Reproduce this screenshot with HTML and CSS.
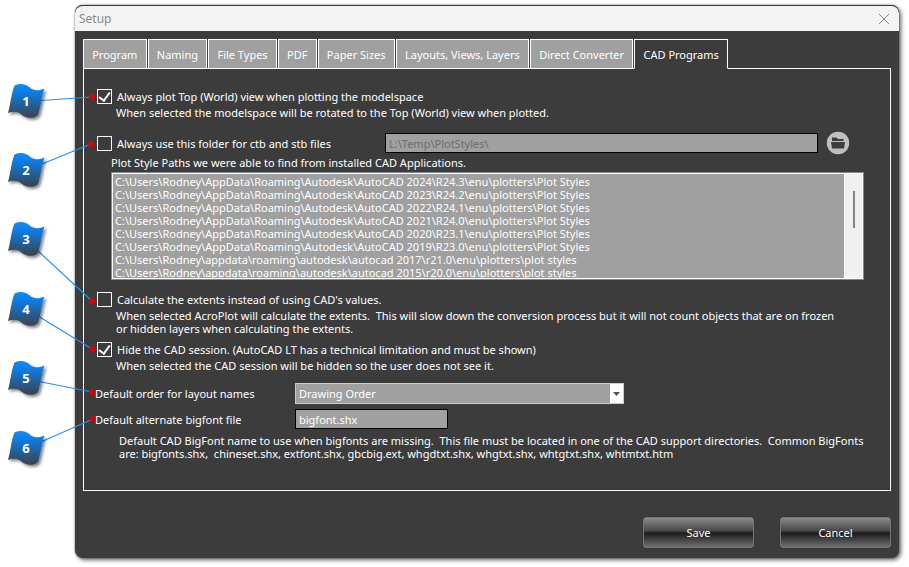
FILE: index.html
```html
<!DOCTYPE html>
<html lang="en">
<head>
  <meta charset="UTF-8" />
  <meta name="viewport" content="width=device-width, initial-scale=1.0" />
  <title>Setup</title>
  <link rel="stylesheet" href="styles.css">
</head>
<body>
  <div class="window">
    <header class="titlebar">
      <span>Setup</span>
      <button type="button" class="close" aria-label="Close">
        <svg width="12" height="12" viewBox="0 0 12 12"><path d="M1 1L11 11M11 1L1 11" stroke="#888" fill="none" /></svg>
      </button>
    </header>
    <form class="content">
      <nav class="tabs">
        <button type="button" class="tab">Program</button>
        <button type="button" class="tab">Naming</button>
        <button type="button" class="tab">File Types</button>
        <button type="button" class="tab">PDF</button>
        <button type="button" class="tab">Paper Sizes</button>
        <button type="button" class="tab">Layouts, Views, Layers</button>
        <button type="button" class="tab">Direct Converter</button>
        <button type="button" class="tab active">CAD Programs</button>
      </nav>
      <div class="panel">
        <div class="option">
          <label class="check"><input type="checkbox" checked>Always plot Top (World) view when plotting the modelspace</label>
          <p class="hint">When selected the modelspace will be rotated to the Top (World) view when plotted.</p>
        </div>

        <div class="option paths">
          <div class="folder-row">
            <label class="check"><input type="checkbox">Always use this folder for ctb and stb files</label>
            <input type="text" class="field folder" value="L:\Temp\PlotStyles\" aria-label="Plot style folder" disabled>
            <button type="button" class="browse" aria-label="Browse">
              <svg width="24" height="24" viewBox="0 0 24 24">
                <circle cx="12" cy="12" r="11.2" fill="#bfbfbf" />
                <path d="M6 10V6.500H10.500L12 8H17.500V10Z" fill="#3d3d3d" />
                <path d="M5 11H19L18 17.500H6Z" fill="#3d3d3d" />
              </svg>
            </button>
          </div>
          <label class="list-label" for="paths">Plot Style Paths we were able to find from installed CAD Applications.</label>
          <div class="listbox">
            <select id="paths" size="8">
              <option>C:\Users\Rodney\AppData\Roaming\Autodesk\AutoCAD 2024\R24.3\enu\plotters\Plot Styles</option>
              <option>C:\Users\Rodney\AppData\Roaming\Autodesk\AutoCAD 2023\R24.2\enu\plotters\Plot Styles</option>
              <option>C:\Users\Rodney\AppData\Roaming\Autodesk\AutoCAD 2022\R24.1\enu\plotters\Plot Styles</option>
              <option>C:\Users\Rodney\AppData\Roaming\Autodesk\AutoCAD 2021\R24.0\enu\plotters\Plot Styles</option>
              <option>C:\Users\Rodney\AppData\Roaming\Autodesk\AutoCAD 2020\R23.1\enu\plotters\Plot Styles</option>
              <option>C:\Users\Rodney\AppData\Roaming\Autodesk\AutoCAD 2019\R23.0\enu\plotters\Plot Styles</option>
              <option>C:\Users\Rodney\appdata\roaming\autodesk\autocad 2017\r21.0\enu\plotters\plot styles</option>
              <option>C:\Users\Rodney\appdata\roaming\autodesk\autocad 2015\r20.0\enu\plotters\plot styles</option>
            </select>
            <div class="scrollbar"><div class="thumb"></div></div>
          </div>
        </div>

        <div class="option tight">
          <label class="check"><input type="checkbox">Calculate the extents instead of using CAD's values.</label>
          <p class="hint">When selected AcroPlot will calculate the extents.&nbsp; This will slow down the conversion process but it will not count objects that are on frozen<br>or hidden layers when calculating the extents.</p>
        </div>

        <div class="option">
          <label class="check"><input type="checkbox" checked>Hide the CAD session. (AutoCAD LT has a technical limitation and must be shown)</label>
          <p class="hint">When selected the CAD session will be hidden so the user does not see it.</p>
        </div>

        <div class="defaults">
          <label for="order">Default order for layout names</label>
          <div class="dropdown">
            <select id="order">
              <option>Drawing Order</option>
            </select>
            <span class="arrow"><svg width="7" height="4" viewBox="0 0 7 4"><path d="M0 0H7L3.500 4Z" fill="#555" /></svg></span>
          </div>
          <label for="bigfont">Default alternate bigfont file</label>
          <input type="text" id="bigfont" class="field" value="bigfont.shx">
        </div>
        <p class="note">Default CAD BigFont name to use when bigfonts are missing.&nbsp; This file must be located in one of the CAD support directories.&nbsp; Common BigFonts<br>are: bigfonts.shx,&nbsp; chineset.shx, extfont.shx, gbcbig.ext, whgdtxt.shx, whgtxt.shx, whtgtxt.shx, whtmtxt.htm</p>
      </div>
      <div class="actions">
        <button type="submit">Save</button>
        <button type="button">Cancel</button>
      </div>
    </form>
  </div>

  <!-- numbered flags pointing at the settings -->
  <svg class="callouts" width="110" height="480" viewBox="0 0 110 480">
    <defs>
      <linearGradient id="flagFill" x1="0" y1="0" x2="0" y2="1">
        <stop offset="0" stop-color="#0a8cff" />
        <stop offset="0.2" stop-color="#0b80ea" />
        <stop offset="1" stop-color="#3e4046" />
      </linearGradient>
      <filter id="shadow" x="-20%" y="-20%" width="150%" height="150%">
        <feDropShadow dx="2" dy="2" stdDeviation="1.500" flood-color="#000" flood-opacity="0.5" />
      </filter>
      <path id="flag" d="M14.500 1.500C20 -1 26 0 29.500 3.500C33 7 39 7 44.500 4.500C41.500 12 41 22 38 31C34 35 27 34.500 22 31C18 27 13 27 8 29C10.500 21 11 10 14.500 1.500Z" fill="url(#flagFill)" filter="url(#shadow)" />
    </defs>
    <g stroke="#2492f5" stroke-width="1.200">
      <path d="M41 100.500L92 97" />
      <path d="M42 164L91 144" />
      <path d="M37 250L92 301" />
      <path d="M38 316L92 349" />
      <path d="M39 381.500L92 392" />
      <path d="M42 441.500L93 419" />
    </g>
    <g fill="#e00000">
      <circle cx="92" cy="97" r="3" />
      <circle cx="91" cy="144" r="3" />
      <circle cx="92" cy="301" r="3" />
      <circle cx="92" cy="349" r="3" />
      <circle cx="92" cy="392" r="3" />
      <circle cx="93" cy="419" r="3" />
    </g>
    <use href="#flag" y="84" />
    <use href="#flag" y="153" />
    <use href="#flag" y="222" />
    <use href="#flag" y="292" />
    <use href="#flag" y="361" />
    <use href="#flag" y="431" />
    <g class="numbers">
      <text x="26" y="106">1</text>
      <text x="26" y="175">2</text>
      <text x="26" y="244">3</text>
      <text x="26" y="314">4</text>
      <text x="26" y="383">5</text>
      <text x="26" y="453">6</text>
    </g>
  </svg>
</body>
</html>
```
FILE: styles.css
```css
* {
  box-sizing: border-box;
}
body {
  margin: 0;
  padding: 5px 10px 9px 75px;
  background: #fff;
  font-family: "Noto Sans", "Open Sans", sans-serif;
  font-size: 11px;
  line-height: 13px;
  color: #fff;
}
p {
  margin: 0;
}
input,
select,
button {
  font: inherit;
  color: inherit;
  margin: 0;
}
.window {
  background: #3c3c3c;
  border-radius: 8px;
  box-shadow: 2px 2px 4px rgba(0, 0, 0, 0.6), 0 0 2px rgba(0, 0, 0, 0.5);
}
.titlebar {
  display: flex;
  justify-content: space-between;
  align-items: center;
  height: 26px;
  padding: 0 9px 0 4px;
  background: #f3f3f3;
  border-top: 1px solid #3c3c3c;
  border-radius: 8px 8px 0 0;
  color: #8a8a8a;
  font-size: 12px;
}
.close {
  display: flex;
  padding: 0;
  border: none;
  background: none;
}
.content {
  padding: 8px 8px 10px;
}
.tabs {
  display: flex;
  gap: 1px;
  max-width: 645px;
}
.tab {
  flex: 1 1 auto;
  height: 30px;
  padding: 0;
  border: 1px solid #fff;
  background: #a0a0a0;
  white-space: nowrap;
}
.tab.active {
  background: #3c3c3c;
  border-bottom-color: #3c3c3c;
  position: relative;
}
.panel {
  margin-top: -1px;
  padding: 19px 26px 30px 11px;
  border: 1px solid #fff;
}
.option {
  margin-bottom: 11px;
  padding-left: 2px;
}
.option.tight {
  margin-bottom: 6px;
}
.paths {
  padding-top: 1px;
}
.check {
  display: flex;
  align-items: center;
  gap: 5px;
  height: 16px;
}
.check input {
  appearance: none;
  width: 15px;
  height: 15px;
  border: 1px solid #fff;
  display: grid;
  place-items: center;
}
.check input:checked::after {
  content: "";
  width: 5px;
  height: 9px;
  border: solid #fff;
  border-width: 0 2px 2px 0;
  transform: rotate(36deg);
  margin-bottom: 3px;
}
.hint {
  padding: 2px 0 0 19px;
}
.field {
  height: 20px;
  padding: 0 3px;
  border: 1px solid #000;
  background: #a0a0a0;
}
.folder-row {
  display: flex;
  align-items: center;
}
.folder-row .check {
  width: 288px;
}
.folder {
  flex: 1;
  color: #6d6d6d;
}
.browse {
  display: flex;
  margin: 0 14px 0 8px;
  padding: 0;
  border: none;
  background: none;
}
.list-label {
  display: block;
  margin: 1px 0 3px 14px;
}
.listbox {
  display: flex;
  height: 108px;
  margin-left: 14px;
  border: 1px solid #828790;
  padding: 1px;
  background: #fff;
}
.listbox select {
  flex: 1;
  height: 104px;
  padding: 0;
  border: none;
  border-radius: 0;
  background: #a0a0a0;
  overflow: hidden;
}
.listbox option {
  height: 13px;
  min-height: 13px;
  line-height: 13px;
  padding: 0 2px;
}
.scrollbar {
  width: 17px;
  margin-left: 1px;
  padding-top: 17px;
  background: #f0f0f0;
}
.thumb {
  width: 2px;
  height: 37px;
  margin: 0 auto;
  background: #858585;
}
.defaults {
  display: grid;
  grid-template-columns: 200px 153px 176px;
  align-items: center;
  row-gap: 5px;
}
.dropdown {
  grid-column: 2 / 4;
  position: relative;
}
.dropdown select {
  display: block;
  width: 100%;
  height: 21px;
  padding: 0 3px;
  line-height: 18px;
  appearance: none;
  border: 1px solid #c8cbd3;
  border-radius: 0;
  background: #a0a0a0;
}
.arrow {
  position: absolute;
  top: 1px;
  right: 1px;
  bottom: 1px;
  width: 13px;
  display: grid;
  place-items: center;
  background: #fff;
  pointer-events: none;
}
.note {
  padding: 5px 0 0 24px;
}
.actions {
  display: flex;
  justify-content: flex-end;
  gap: 26px;
  margin-top: 26px;
}
.actions button {
  width: 111px;
  height: 31px;
  border: 1px solid #777;
  border-radius: 3px;
  background: linear-gradient(#8a8a8a, #484848 44%, #1c1c1c 52%, #2a2a2a 60%, #707070);
  box-shadow: 0 0 1px #222;
}
.callouts {
  position: absolute;
  top: 0;
  left: 0;
  pointer-events: none;
}
.numbers {
  font-size: 13px;
  font-weight: bold;
  text-anchor: middle;
  fill: #fff;
}
```
